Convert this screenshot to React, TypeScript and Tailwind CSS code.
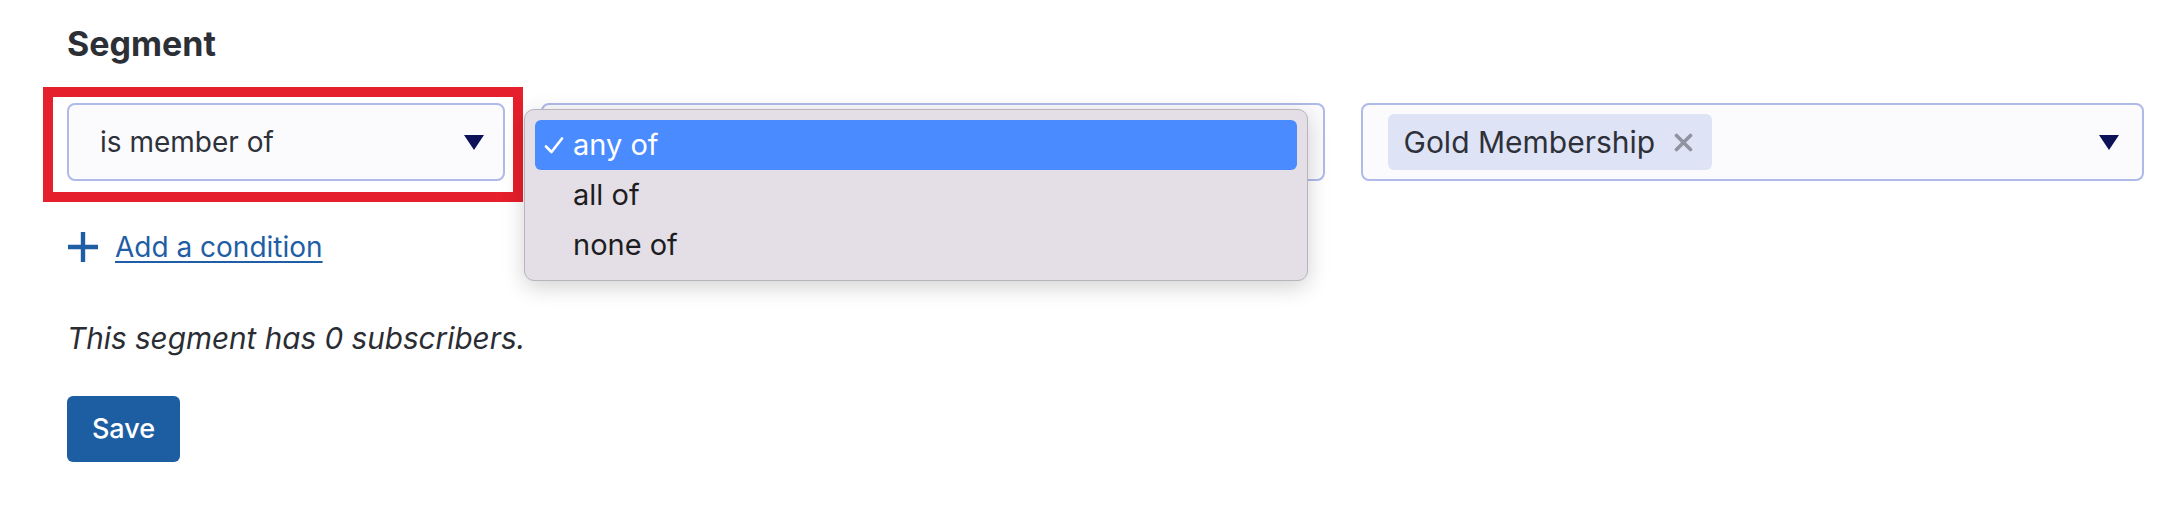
import React from "react";

const Caret = () => (
  <svg width="20" height="15" viewBox="0 0 20 15" className="shrink-0">
    <polygon points="0,0 20,0 10,15" fill="#0c1158" />
  </svg>
);

export default function App() {
  return (
    <div
      className="relative w-[2172px] h-[508px] bg-white pl-[67px] pr-[28px] pt-[24px] overflow-hidden"
      style={{ fontFamily: "Inter, 'Noto Sans', sans-serif" }}
    >
      <h2 className="text-[34px] leading-[40px] font-bold text-[#2c2f36]">Segment</h2>

      <div className="mt-[39px] flex gap-[36px]">
        {/* select 1 */}
        <div className="relative w-[438px] shrink-0">
          <div className="h-[78px] rounded-[8px] border-2 border-[#b0bae9] bg-[#fbfbfe] flex items-center pl-[31px] pr-[19px]">
            <span className="flex-1 text-[28px] text-[#2e3139]">is member of</span>
            <Caret />
          </div>
          <div className="absolute left-[-24px] top-[-16px] right-[-18px] bottom-[-21px] border-[10px] border-[#e51f2b] pointer-events-none" />
        </div>

        {/* select 2 with open menu */}
        <div className="relative flex-1">
          <div className="h-[78px] rounded-[8px] border-2 border-[#b0bae9] bg-[#fbfbfe]" />
          <div className="absolute left-[-17px] top-[6px] w-[784px] rounded-[10px] border border-[#b9b4bc] bg-[#e4dfe6] px-[10px] pt-[10px] pb-[10px] shadow-[0_6px_22px_rgba(0,0,0,0.18)] text-[29px] text-[#1d1d1f]">
            <div className="h-[50px] rounded-[6px] bg-[#4a8bff] text-white flex items-center pl-[9px]">
              <svg width="20" height="17" viewBox="0 0 20 17" className="shrink-0">
                <polyline points="2,9.5 7.5,15 18,1.5" fill="none" stroke="white" strokeWidth="2.6" strokeLinecap="round" strokeLinejoin="round" />
              </svg>
              <span className="ml-[9px]">any of</span>
            </div>
            <div className="h-[50px] flex items-center pl-[38px]">all of</div>
            <div className="h-[50px] flex items-center pl-[38px]">none of</div>
          </div>
        </div>

        {/* select 3 */}
        <div className="flex-1">
          <div className="h-[78px] rounded-[8px] border-2 border-[#b0bae9] bg-[#fbfbfe] flex items-center pl-[25px] pr-[23px]">
            <div className="h-[56px] rounded-[6px] bg-[#dfe3f6] flex items-center pl-[16px] pr-[19px]">
              <span className="text-[30px] text-[#2e3139]">Gold Membership</span>
              <svg width="19" height="19" viewBox="0 0 19 19" className="ml-[19px] shrink-0">
                <path d="M2.5 2.5 L16.5 16.5 M16.5 2.5 L2.5 16.5" stroke="#8f94a0" strokeWidth="3.6" strokeLinecap="round" />
              </svg>
            </div>
            <div className="flex-1" />
            <Caret />
          </div>
        </div>
      </div>

      <div className="mt-[46px] h-[40px] flex items-center">
        <svg width="32" height="32" viewBox="0 0 32 32" className="shrink-0">
          <path d="M16 1 V31 M1 16 H31" stroke="#1f5ea4" strokeWidth="4.4" />
        </svg>
        <a
          href="#"
          className="ml-[16px] text-[28px] text-[#1f5ea4] underline decoration-[2px] underline-offset-[4px]"
        >
          Add a condition
        </a>
      </div>

      <p className="mt-[51px] text-[29.7px] leading-[40px] italic text-[#2a2d33]">
        This segment has 0 subscribers.
      </p>

      <button className="mt-[38px] w-[113px] h-[66px] rounded-[6px] bg-[#1d5ea3] text-white text-[27px] font-medium flex items-center justify-center">
        Save
      </button>
    </div>
  );
}
